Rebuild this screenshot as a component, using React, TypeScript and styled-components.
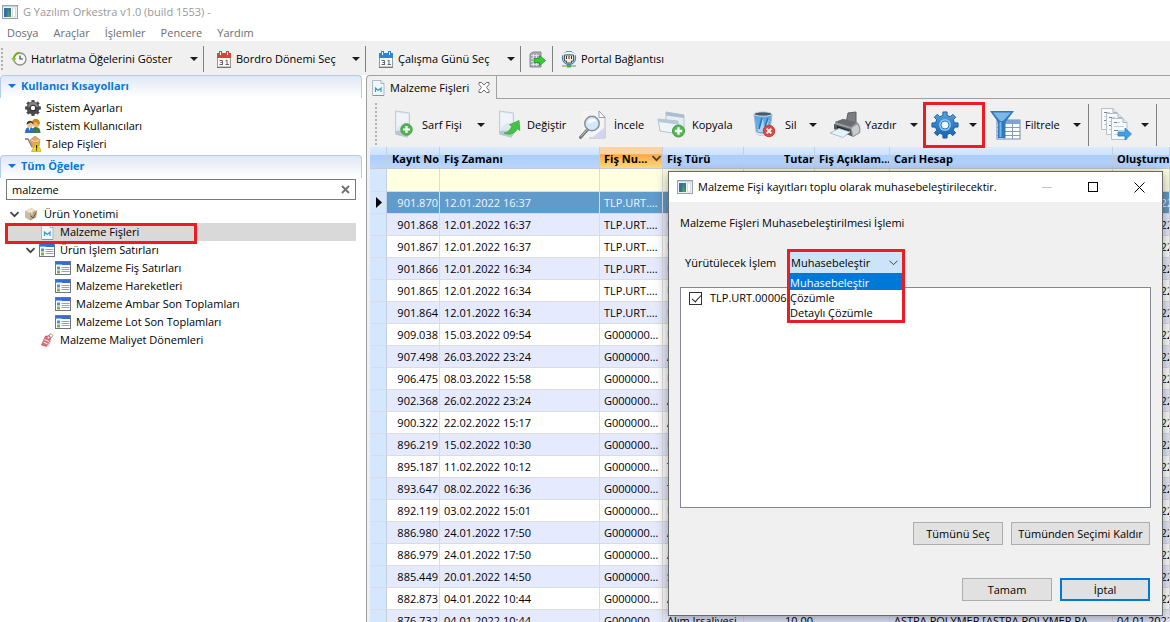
import React from "react";
import styled, { createGlobalStyle, css } from "styled-components";

const GlobalStyle = createGlobalStyle`
  * { box-sizing: border-box; }
  body { margin: 0; overflow: hidden; }
  body, button, input, select, table {
    font-family: "Open Sans", "Noto Sans", sans-serif;
    font-size: 11px;
    line-height: 16px;
    color: #000;
  }
  button { margin: 0; padding: 0; border: 0; background: none; white-space: nowrap; }
  svg { display: block; flex: none; }
  ul { list-style: none; margin: 0; padding: 0; }
`;

/* ---------- Window frame ---------- */

const Window = styled.div`
  position: relative;
  display: flex;
  flex-direction: column;
  height: 100vh;
  overflow: hidden;
  background: #fff;
`;

const TitleBar = styled.header`
  display: flex;
  align-items: center;
  gap: 5px;
  height: 23px;
  padding-left: 2px;
  color: #999;
  flex: none;
`;

const MenuBar = styled.nav`
  display: flex;
  align-items: center;
  gap: 15px;
  height: 18px;
  padding: 2px 0 0 7px;
  flex: none;
`;

const MenuItem = styled.button`
  color: #6d6d6d;
`;

const MainToolbar = styled.div`
  display: flex;
  align-items: center;
  height: 34px;
  padding-top: 2px;
  background: #f0f0f0;
  flex: none;
`;

const Grip = styled.span<{ $tall?: boolean }>`
  width: 2px;
  margin-left: ${(p) => (p.$tall ? 5 : 1)}px;
  height: ${(p) => (p.$tall ? 44 : 22)}px;
  background: repeating-linear-gradient(#b0b0b0 0 2px, transparent 2px 4px);
  flex: none;
`;

const MainTool = styled.button<{ $width?: number; $indent?: boolean }>`
  display: flex;
  align-items: center;
  gap: 4px;
  width: ${(p) => (p.$width ? p.$width + "px" : "auto")};
  height: 26px;
  padding: 0 5px 0 ${(p) => (p.$indent ? 12 : 8)}px;
  border-right: ${(p) => (p.$width ? "1px solid #808080" : "0")};
`;

const ArrowMark = styled.span`
  width: 0;
  height: 0;
  margin-left: auto;
  border: 4px solid transparent;
  border-top-color: #1c1c1c;
  border-bottom: 0;
`;

const Content = styled.div`
  display: flex;
  flex: 1;
  min-height: 0;
`;

/* ---------- Left pane ---------- */

const SidePane = styled.aside`
  display: flex;
  flex-direction: column;
  width: 362px;
  flex: none;
  background: #fff;
`;

const SectionHead = styled.button`
  display: flex;
  align-items: center;
  gap: 5px;
  height: 23px;
  padding: 0 0 2px 7px;
  border: 1px solid #b4cde4;
  border-bottom: 0;
  border-radius: 4px 4px 0 0;
  background: linear-gradient(#dfe8f4, #fff);
  color: #0a78d4;
  font-weight: 700;
  text-align: left;
  flex: none;
`;

const SectionArrow = styled.span`
  border: 4px solid transparent;
  border-top-color: #0a78d4;
  border-bottom: 0;
`;

const ShortcutList = styled.ul`
  padding: 1px 0 2px;
`;

const Shortcut = styled.li`
  display: flex;
  align-items: center;
  gap: 5px;
  height: 18px;
  padding-left: 25px;
`;

const SearchField = styled.div`
  display: flex;
  align-items: center;
  height: 21px;
  margin: 1px 6px 5px;
  padding: 0 5px;
  border: 1px solid #7a7a7a;
  flex: none;
`;

const SearchInput = styled.input`
  flex: 1;
  min-width: 0;
  height: 18px;
  padding: 0;
  border: 0;
  outline: 0;
  background: none;
`;

const Tree = styled.ul`
  margin: 0 6px;
`;

const TreeRow = styled.li<{ $level: number; $selected?: boolean }>`
  position: relative;
  display: flex;
  align-items: center;
  gap: 5px;
  height: 18px;
  padding-left: ${(p) => p.$level * 16 + 3}px;
  background: ${(p) => (p.$selected ? "#d9d9d9" : "transparent")};
`;

const Twisty = styled.span`
  width: 9px;
  flex: none;
`;

const RedFrame = styled.span<{ $t?: number; $r?: number; $b?: number; $l?: number; $w?: number }>`
  position: absolute;
  top: ${(p) => p.$t ?? -2}px;
  bottom: ${(p) => p.$b ?? -2}px;
  left: ${(p) => p.$l ?? -2}px;
  ${(p) => (p.$w ? `width: ${p.$w}px;` : `right: ${p.$r ?? -2}px;`)}
  border: 3px solid #ed1c24;
  pointer-events: none;
  z-index: 2;
`;

/* ---------- Editor ---------- */

const Editor = styled.main`
  display: flex;
  flex-direction: column;
  flex: 1;
  min-width: 0;
  margin-left: 4px;
  padding-left: 3px;
  border: 1px solid #a0a0a0;
  border-right: 0;
  border-bottom: 0;
  border-radius: 4px 0 0 0;
  background: #f0f0f0;
`;

const TabStrip = styled.div`
  display: flex;
  height: 23px;
  margin-left: -3px;
  flex: none;
`;

const Tab = styled.button`
  display: flex;
  align-items: center;
  width: 130px;
  padding: 0 6px 0 5px;
  border-right: 1px solid #a0a0a0;
`;

const TabLabel = styled.span`
  flex: 1;
  padding-left: 5px;
  text-align: left;
`;

const TabFiller = styled.div`
  flex: 1;
  border-bottom: 1px solid #a0a0a0;
`;

const EditorToolbar = styled.div`
  display: flex;
  align-items: center;
  height: 48px;
  padding-top: 3px;
  flex: none;
`;

const Tool = styled.button<{ $width: number; $slot: number; $bar?: boolean }>`
  position: relative;
  display: grid;
  grid-template-columns: ${(p) => p.$slot}px auto 1fr;
  align-items: center;
  width: ${(p) => p.$width}px;
  height: 42px;
  text-align: left;
  padding-right: 13px;
  flex: none;
  ${(p) =>
    p.$bar &&
    css`
      padding-right: 7px;
      border-right: 1px solid #808080;
    `}
`;

const ToolGap = styled.span<{ $width: number }>`
  width: ${(p) => p.$width}px;
  flex: none;
`;

const GridView = styled.div`
  flex: 1;
  min-height: 0;
  overflow: hidden;
  background: #fff;
`;

const Grid = styled.table`
  width: 100%;
  table-layout: fixed;
  border-collapse: separate;
  border-spacing: 0;
`;

const HeadCell = styled.th<{ $right?: boolean; $sorted?: boolean }>`
  height: 22px;
  padding: 2px 0 0 4px;
  overflow: hidden;
  white-space: nowrap;
  font-weight: 700;
  text-align: ${(p) => (p.$right ? "right" : "left")};
  border-right: 1px solid #c3cfdf;
  border-bottom: 1px solid #c3cbd8;
  background: ${(p) =>
    p.$sorted
      ? "linear-gradient(#fbd3a0 0 35%, #f9a648 36%, #ffdb78)"
      : "linear-gradient(#dcebfe 0, #cde2fe 36%, #abcdfb 37%, #b9d6fd)"};
`;

const SortedLabel = styled.span`
  display: flex;
  align-items: center;
  justify-content: space-between;
`;

const GridRow = styled.tr<{ $tone: "filter" | "selected" | "odd" | "even" }>`
  height: ${(p) => (p.$tone === "filter" ? 23 : 22)}px;
  color: ${(p) => (p.$tone === "selected" ? "#f2f6fb" : "#000")};
  background: ${(p) =>
    ({ filter: "#ffffe1", selected: "#609bcb", odd: "#e5eafe", even: "#fff" })[p.$tone]};
`;

const Cell = styled.td<{ $right?: boolean }>`
  padding: 0 ${(p) => (p.$right ? 1 : 0)}px 0 4px;
  overflow: hidden;
  white-space: nowrap;
  text-align: ${(p) => (p.$right ? "right" : "left")};
  border-right: 1px solid #dcdcdc;
  border-bottom: 1px solid #dcdcdc;
`;

const RowHead = styled.td`
  padding: 0 0 0 6px;
  border-right: 1px solid #c3cfdf;
  border-bottom: 1px solid #d8dde6;
  background: #d5e7fe;
`;

/* ---------- Dialog ---------- */

const Dialog = styled.section`
  position: absolute;
  top: 171px;
  right: 7px;
  width: 495px;
  border: 1px solid #6b6b6b;
  background: #f0f0f0;
  box-shadow: 0 2px 12px rgba(0, 0, 0, 0.4);
`;

const DialogTitle = styled.header`
  display: flex;
  align-items: center;
  height: 30px;
  padding-left: 8px;
  background: #fff;
`;

const DialogName = styled.h2`
  flex: 1;
  margin: 0;
  padding-left: 5px;
  font-size: 11px;
  font-weight: 400;
`;

const WindowButton = styled.button`
  display: flex;
  align-items: center;
  justify-content: center;
  width: 46px;
  height: 30px;
`;

const DialogBody = styled.div`
  padding: 13px 11px 14px;
`;

const Intro = styled.p`
  margin: 0 0 20px;
`;

const FieldRow = styled.div`
  display: flex;
  align-items: center;
  padding-left: 5px;
  margin-bottom: 13px;
`;

const FieldLabel = styled.label`
  width: 104px;
`;

const Combo = styled.div`
  position: relative;
  width: 114px;
  height: 23px;
`;

const ComboSelect = styled.select`
  appearance: none;
  width: 100%;
  height: 23px;
  padding: 0 0 0 1px;
  border: 1px solid #0078d7;
  border-radius: 0;
  background: #cce4f7;
  outline: 0;
`;

const ComboChevron = styled.span`
  position: absolute;
  right: 5px;
  top: 9px;
  pointer-events: none;
`;

const ComboList = styled.ul`
  position: absolute;
  z-index: 1;
  top: 23px;
  left: 0;
  right: 0;
  border: 1px solid #0078d7;
  background: #fff;
`;

const ComboOption = styled.li<{ $active?: boolean }>`
  height: 15px;
  line-height: 15px;
  color: ${(p) => (p.$active ? "#fff" : "#000")};
  background: ${(p) => (p.$active ? "#0078d7" : "#fff")};
`;

const RecordList = styled.div`
  height: 221px;
  padding: 2px 8px;
  border: 1px solid #828790;
  background: #fff;
`;

const Record = styled.label`
  display: flex;
  align-items: center;
  gap: 8px;
`;

const CheckBox = styled.input`
  appearance: none;
  width: 13px;
  height: 13px;
  margin: 0;
  border: 1px solid #333;
  background: #fff;
  &:checked::after {
    content: "";
    display: block;
    width: 4px;
    height: 8px;
    margin: 0 0 0 4px;
    border: solid #222;
    border-width: 0 1px 1px 0;
    transform: rotate(42deg);
  }
`;

const ButtonRow = styled.div<{ $gap?: number }>`
  display: flex;
  justify-content: flex-end;
  gap: 8px;
  margin-top: ${(p) => p.$gap ?? 14}px;
  padding-right: 1px;
`;

const PushButton = styled.button<{ $wide?: boolean; $primary?: boolean }>`
  width: ${(p) => (p.$wide ? 139 : 90)}px;
  height: 23px;
  border: ${(p) => (p.$primary ? "2px solid #0078d7" : "1px solid #adadad")};
  background: #e1e1e1;
`;

/* ---------- Icons ---------- */

const AppIcon = () => (
  <svg width="16" height="14" viewBox="0 0 16 14">
    <rect x=".5" y=".5" width="15" height="13" fill="#eef1f4" stroke="#9aa4ae" />
    <rect x="2" y="3" width="7" height="9" fill="#3c7d86" />
    <path d="M2 3h3v9H2z" fill="#356fa8" />
    <path d="M6 5l3 7H5z" fill="#4f9b5e" />
    <path d="M10.500 3v9h3V3z" fill="#fff" stroke="#d5dbe1" />
    <path d="M1 1.500h14" stroke="#c9d3de" />
  </svg>
);

const ClockIcon = () => (
  <svg width="16" height="16" viewBox="0 0 16 16">
    <circle cx="9" cy="8" r="6" fill="#f7f7f7" stroke="#8f8f8f" strokeWidth="1.300" />
    <path d="M9 4.500V8h3" fill="none" stroke="#444" strokeWidth="1.200" />
    <path d="M2.800 9A6.300 6.300 0 0 1 8.500 1.700" fill="none" stroke="#6fae17" strokeWidth="1.800" />
    <path d="M0 7h5.500L2.800 10.500z" fill="#8ac926" />
  </svg>
);

const CalendarIcon = ({ color }: { color: string }) => (
  <svg width="16" height="17" viewBox="0 0 16 17">
    <rect x="1.500" y="3" width="13" height="13" fill="#fbfbfb" stroke="#9a9a9a" />
    <rect x="1" y="2" width="14" height="5" fill={color} />
    <path d="M4.500 0v4M11.500 0v4" stroke={color} strokeWidth="3" />
    <path d="M4.500 1v3M11.500 1v3" stroke="#fff" strokeWidth="1" />
    <path d="M3.500 9.500H6.500V14M3.500 13.500H7M4.500 11.500H7M9.500 10l1.500-1v5M9.500 13.500H13" fill="none" stroke="#666" />
    <path d="M1 16.500h14" stroke="#777" />
  </svg>
);

const ExitIcon = () => (
  <svg width="17" height="17" viewBox="0 0 17 17">
    <path d="M1 3l3-2h8v15H1z" fill="#a9a8b4" stroke="#8a8996" />
    <path d="M2 4.500h9M2 7.500h9M2 10.500h9M2 13.500h9M4.500 3v12M7.500 3v12" stroke="#dedee4" />
    <path d="M5 7.500h5.500V4.500l6 5-6 5v-3H5z" fill="#35cf35" stroke="#1a8f1a" strokeWidth=".8" />
  </svg>
);

const PortalIcon = () => (
  <svg width="16" height="17" viewBox="0 0 16 17">
    <circle cx="8" cy="7" r="6.700" fill="#a9cdec" stroke="#3b78b8" />
    <path d="M2 4c4-3 8-3 12 0" stroke="#e9f5ff" fill="none" strokeWidth="2" />
    <path d="M3.500 4h9v6h-2v2h-5v-2h-2z" fill="#f1ead9" stroke="#5b5046" />
    <path d="M5.500 5v3M8 5v3M10.500 5v3" stroke="#3a3028" />
    <path d="M1 15h14M8 12v3" stroke="#6c8c6c" />
    <rect x="6" y="14" width="4" height="2.500" fill="#39b54a" />
  </svg>
);

const gearPath = (n: number, ro: number, ri: number, c: number) => {
  const pts: string[] = [];
  const step = (Math.PI * 2) / n;
  for (let i = 0; i < n; i++) {
    const a = i * step - Math.PI / 2;
    [
      [-0.28, ri],
      [-0.2, ro],
      [0.2, ro],
      [0.28, ri],
    ].forEach(([d, r]) => {
      pts.push(`${(c + r * Math.cos(a + d * step)).toFixed(2)} ${(c + r * Math.sin(a + d * step)).toFixed(2)}`);
    });
  }
  return "M" + pts.join("L") + "Z";
};

const DarkGearIcon = () => (
  <svg width="16" height="16" viewBox="0 0 16 16">
    <path d={gearPath(8, 7.8, 6.2, 8)} fill="#4a4a4a" stroke="#2e2e2e" strokeWidth=".5" />
    <path d="M3 7a5 5 0 0 1 10 0" fill="#858585" />
    <circle cx="8" cy="8" r="2.800" fill="#fff" stroke="#222" />
  </svg>
);

const UsersIcon = () => (
  <svg width="16" height="16" viewBox="0 0 16 16">
    <path d="M7 15c0-4 1-6 4-6s4.500 2 4.500 6z" fill="#3f7a4a" />
    <circle cx="11" cy="5.500" r="3.500" fill="#f0b36a" />
    <path d="M7 6c-1-7 8-7 8-.5l-2 2c0-2-1-3-3-3.500z" fill="#c98a1c" />
    <path d="M0 15c0-4 1.500-6 4.500-6S9 11 9 15z" fill="#2f6dc4" />
    <path d="M3.500 9h2L4.500 13z" fill="#fff" />
    <circle cx="5" cy="6.500" r="3" fill="#f3c38c" />
    <path d="M1.500 6.500c0-5 7-5 7 0L6 4.500z" fill="#4e3520" />
  </svg>
);

const CartIcon = () => (
  <svg width="17" height="16" viewBox="0 0 17 16">
    <path d="M0 3h3l4 8" fill="none" stroke="#777" strokeWidth="1.300" />
    <path d="M5 4l5-4 5 4-1 6-6 2z" fill="#e3a565" stroke="#b98552" strokeWidth=".7" />
    <path d="M6 4l4 1.500L14.500 4" fill="none" stroke="#fadcb8" />
    <path d="M11.500 6L16.500 15.500H6.500z" fill="#f7dc1e" stroke="#c9a800" strokeWidth=".7" />
    <path d="M11.600 9v3.500M11.600 13.300v1.200" stroke="#222" strokeWidth="1.300" />
  </svg>
);

const BoxIcon = () => (
  <svg width="14" height="14" viewBox="0 0 14 14">
    <path d="M1 4l6-3 6 2.500-1 7-6 3-5-3z" fill="#cdbca2" />
    <path d="M1 4l5 2 7-2.500L7 1z" fill="#eadfcc" />
    <path d="M6 6v7.500l6-3 1-7z" fill="#b6a081" />
    <path d="M7 9l2 2 3-5" stroke="#6d5b43" fill="none" />
    <path d="M3 3l5 2v3" stroke="#f4ecdc" fill="none" />
  </svg>
);

const DocIcon = () => (
  <svg width="13" height="16" viewBox="0 0 13 16">
    <path d="M.5 .5H9L12 3.500V15.500H.5z" fill="#f1f6f9" stroke="#a9bcc9" />
    <path d="M9 .5v3h3" fill="#fff" stroke="#9fb4c4" />
    <path d="M3.500 12V8L6.300 10.500 9 8V12" fill="none" stroke="#3d9ccb" strokeWidth="1.200" />
    <path d="M1 15.500h11" stroke="#7b98aa" />
  </svg>
);

const FormIcon = () => (
  <svg width="16" height="14" viewBox="0 0 16 14">
    <rect x=".5" y=".5" width="15" height="13" fill="#fff" stroke="#6f7683" />
    <rect x="1" y="1" width="14" height="3" fill="#2e6fdc" />
    <path d="M1 3.500h6" stroke="#7fb0f5" />
    <rect x="2" y="5.500" width="3" height="3" fill="#4a94e0" />
    <rect x="2" y="9.500" width="3" height="3" fill="#7fb53a" />
    <path d="M6.500 6.500h8M6.500 8.500h8M6.500 10.500h8" stroke="#9ca2ac" />
  </svg>
);

const TagIcon = () => (
  <svg width="14" height="14" viewBox="0 0 14 14">
    <path d="M8 3l3-2.500 2 2-2.500 3" fill="none" stroke="#8d8d8d" />
    <path d="M5.500 3L10 3l.5 3.500-4 7L1.500 12z" fill="#dd6a70" stroke="#b5474f" strokeWidth=".6" />
    <path d="M4.500 6.500l4.500 2M3.500 9l4 2" stroke="#fbe6e7" strokeWidth="1.200" />
    <circle cx="8.500" cy="4.500" r="1" fill="#fff" />
    <path d="M8 13.500l3-6" stroke="#bfc4c9" />
  </svg>
);

const ExpandIcon = () => (
  <svg width="11" height="7" viewBox="0 0 11 7">
    <path d="M1.500 1.200l4 4 4-4" fill="none" stroke="#404040" strokeWidth="1.700" />
  </svg>
);

const ClearIcon = () => (
  <svg width="9" height="9" viewBox="0 0 9 9">
    <path d="M1 1l7 7M8 1L1 8" stroke="#6f6f6f" strokeWidth="1.800" />
  </svg>
);

const TabCloseIcon = () => (
  <svg width="12" height="11" viewBox="0 0 12 11">
    <path
      d="M1 .5h2.500L6 3 8.500.5H11v2L8.500 5.500 11 8.500v2H8.500L6 8l-2.500 2.500H1v-2L3.500 5.500 1 2.500z"
      fill="#fff"
      stroke="#6a6a6a"
    />
  </svg>
);

const PageShape = () => (
  <g>
    <path d="M1.500 1l14 2v20l-2 4-12-3z" fill="#dce7ee" stroke="#c0ced8" />
    <path d="M2.500 2.500l12 1.700V13C9 12 5 15 2.500 19z" fill="#eef4f8" />
    <path d="M1.500 21l14-1v3l-2 4.500-12-3z" fill="#b7c8d3" />
  </g>
);

const NewIcon = () => (
  <svg width="19" height="29" viewBox="0 0 19 29">
    <PageShape />
    <circle cx="12.500" cy="19.500" r="5.700" fill="#4fb54f" stroke="#4a9a4c" />
    <path d="M12.500 16v7M9 19.500h7" stroke="#fff" strokeWidth="2.200" />
  </svg>
);

const EditIcon = () => (
  <svg width="24" height="29" viewBox="0 0 24 29">
    <PageShape />
    <path
      d="M6 23c4 0 6-3 8-7l-2.500-1.200L21 10.500l.8 10-2.300-1.800c-2.500 4.500-7 7-13.500 4.300z"
      fill="#45c245"
      stroke="#38a83c"
      strokeWidth=".8"
    />
  </svg>
);

const InspectIcon = () => (
  <svg width="28" height="29" viewBox="0 0 28 29">
    <path d="M2.500 1H20l6 6v21H2.500z" fill="#f4f4f5" />
    <path d="M20 1l6 6v21H10" fill="none" stroke="#b5b8c0" />
    <path d="M20 1v6.500h6z" fill="#fff" stroke="#9da0a8" />
    <path d="M25 18v9H14z" fill="#cdd6f8" />
    <path d="M1.500 27.500L9 19" stroke="#777" strokeWidth="3" strokeLinecap="round" />
    <path d="M2 26.500L8.500 19" stroke="#c4c4c4" />
    <circle cx="13" cy="13.500" r="7.200" fill="#d4e8fb" stroke="#8a9099" strokeWidth="1.500" />
    <path d="M8.500 13a5 5 0 0 1 9-2c-3 0-5 3-9 2z" fill="#f5fbff" />
  </svg>
);

const CopyIcon = () => (
  <svg width="29" height="28" viewBox="0 0 29 28">
    <path d="M9 1l18 3v13l-18-2z" fill="#e6eef3" stroke="#b4c4cf" />
    <path d="M9 1l18 3v3L9 4.500z" fill="#a9bfce" />
    <path d="M1 8l20 2v13L3 20z" fill="#eef4f8" stroke="#b4c4cf" />
    <path d="M1 8l20 2v3.500L1.500 11z" fill="#b5c8d4" />
    <circle cx="21.500" cy="20" r="6" fill="#52b752" stroke="#3f9a42" />
    <path d="M21.500 16.300v7.400M17.800 20h7.400" stroke="#fff" strokeWidth="2.300" />
  </svg>
);

const DeleteIcon = () => (
  <svg width="23" height="27" viewBox="0 0 23 27">
    <path d="M1 3h18l-2.500 20c-4 2-9 2-13 0z" fill="#5fa8e2" stroke="#a3b4c2" />
    <path d="M3 7l2 11 5-11 1 9 5-9-2 14H5z" fill="#a9d5f6" />
    <path d="M9 7L6 18M15 7l-4 12" stroke="#2d70b4" strokeWidth="1.500" />
    <ellipse cx="10" cy="3" rx="9" ry="2.200" fill="#48596a" stroke="#d3dbe1" />
    <path d="M3 22c4 2 9 2 13 0" stroke="#dfe6ec" strokeWidth="2" fill="none" />
    <circle cx="16" cy="20" r="5.700" fill="#e04a43" stroke="#c93a34" />
    <path d="M13.700 17.700l4.600 4.600M18.300 17.700l-4.600 4.600" stroke="#fff" strokeWidth="1.900" />
  </svg>
);

const PrintIcon = () => (
  <svg width="31" height="27" viewBox="0 0 31 27">
    <path d="M16 12L18 2l8-1v12z" fill="#7b7d80" stroke="#5d5f62" />
    <path d="M5 11l8-3 14 3c3 2 4 7 3 11l-7 4-9-4-9-4z" fill="#9a9c9f" />
    <path d="M5 11l8-3 14 3-6 5z" fill="#696c70" />
    <path d="M4 13l17 5 1 7-9-3-9-4z" fill="#55585c" />
    <path d="M21 17l6-4c3 2 3 6 2 9l-6 3.500z" fill="#c9cbce" stroke="#85888c" strokeWidth=".7" />
    <path d="M7 15l12 4v2L7 17z" fill="#232528" />
    <path d="M0 22l9-4.500L20 21l-7 5.500z" fill="#e3f4fc" stroke="#9fb6c2" strokeWidth=".8" />
  </svg>
);

const GearIcon = () => (
  <svg width="28" height="28" viewBox="0 0 28 28">
    <defs>
      <linearGradient id="gearFill" x1="0" y1="0" x2="0" y2="1">
        <stop offset="0" stopColor="#5ea6de" />
        <stop offset=".5" stopColor="#2c80c8" />
        <stop offset="1" stopColor="#1c64ac" />
      </linearGradient>
    </defs>
    <path d={gearPath(8, 13.2, 9.8, 14)} fill="url(#gearFill)" stroke="#1f62a6" strokeLinejoin="round" />
    <circle cx="14" cy="14" r="6" fill="#8cc3ec" />
    <circle cx="14" cy="14" r="4" fill="#f4f8fb" stroke="#2b78bb" />
  </svg>
);

const FilterIcon = () => (
  <svg width="31" height="30" viewBox="0 0 31 30">
    <rect x="7" y="10" width="23" height="19" fill="#fff" stroke="#6d8bb3" />
    <rect x="7" y="10" width="23" height="4" fill="#7ea5d6" />
    <path d="M7 17.500h23M7 21.500h23M7 25.500h23M14.500 10v19M22.500 10v19" stroke="#7f9bc0" />
    <path d="M0 1h24l-8.500 11v16H8V12z" fill="#3079bd" />
    <path d="M3 2.500h18L13 11H10z" fill="#7db9e6" />
    <path d="M9.500 12h2v15h-2z" fill="#7ab5e2" />
  </svg>
);

const Leaf = ({ x, y }: { x: number; y: number }) => (
  <g transform={`translate(${x} ${y})`}>
    <path d="M.5 .5H12l4 4V21.500H.5z" fill="#f7fafc" stroke="#b4c0ca" />
    <path d="M12 .5v4h4" fill="#dfe7ec" stroke="#a9b6c0" />
    <path d="M3 4.500h6M3 8.500h10M3 12.500h10M3 16.500h7" stroke="#c3ced6" />
    <path d="M3 4.500h3M3 12.500h4" stroke="#70869a" />
  </g>
);

const ExportIcon = () => (
  <svg width="32" height="33" viewBox="0 0 32 33">
    <Leaf x={0} y={0} />
    <Leaf x={5} y={5} />
    <Leaf x={10} y={10} />
    <path d="M17 24h7v-4l6.500 6-6.500 6v-4h-7z" fill="#3da0e8" stroke="#2a80c4" strokeWidth=".8" />
  </svg>
);

/* ---------- Data ---------- */

const shortcuts = [
  { icon: <DarkGearIcon />, label: "Sistem Ayarları" },
  { icon: <UsersIcon />, label: "Sistem Kullanıcıları" },
  { icon: <CartIcon />, label: "Talep Fişleri" },
];

type Node = { level: number; icon: React.ReactNode; label: string; open?: boolean; selected?: boolean };
const nodes: Node[] = [
  { level: 0, icon: <BoxIcon />, label: "Ürün Yonetimi", open: true },
  { level: 1, icon: <DocIcon />, label: "Malzeme Fişleri", selected: true },
  { level: 1, icon: <FormIcon />, label: "Ürün İşlem Satırları", open: true },
  { level: 2, icon: <FormIcon />, label: "Malzeme Fiş Satırları" },
  { level: 2, icon: <FormIcon />, label: "Malzeme Hareketleri" },
  { level: 2, icon: <FormIcon />, label: "Malzeme Ambar Son Toplamları" },
  { level: 2, icon: <FormIcon />, label: "Malzeme Lot Son Toplamları" },
  { level: 1, icon: <TagIcon />, label: "Malzeme Maliyet Dönemleri" },
];

const IconSlot = styled.span`
  display: flex;
  justify-content: center;
  width: 16px;
  max-height: 18px;
  overflow: hidden;
  flex: none;
`;

type Entry = [no: string, time: string, code: string, kind: string, amount?: string, account?: string];
const records: Entry[] = [
  ["901.870", "12.01.2022 16:37", "TLP.URT.…", "Üretim"],
  ["901.868", "12.01.2022 16:37", "TLP.URT.…", "Üretim"],
  ["901.867", "12.01.2022 16:37", "TLP.URT.…", "Üretim"],
  ["901.866", "12.01.2022 16:34", "TLP.URT.…", "Üretim"],
  ["901.865", "12.01.2022 16:34", "TLP.URT.…", "Üretim"],
  ["901.864", "12.01.2022 16:34", "TLP.URT.…", "Üretim"],
  ["909.038", "15.03.2022 09:54", "G000000…", "Üretim"],
  ["907.498", "26.03.2022 23:24", "G000000…", "Alım İrsaliyesi"],
  ["906.475", "08.03.2022 15:58", "G000000…", "Üretim"],
  ["902.368", "26.02.2022 23:24", "G000000…", "Alım İrsaliyesi"],
  ["900.322", "22.02.2022 15:17", "G000000…", "Alım İrsaliyesi"],
  ["896.219", "15.02.2022 10:30", "G000000…", "Üretim"],
  ["895.187", "11.02.2022 10:12", "G000000…", "Transfer"],
  ["893.647", "08.02.2022 16:36", "G000000…", "Transfer"],
  ["892.119", "03.02.2022 15:01", "G000000…", "Üretim"],
  ["886.980", "24.01.2022 17:50", "G000000…", "Alım İrsaliyesi"],
  ["886.979", "24.01.2022 17:50", "G000000…", "Alım İrsaliyesi"],
  ["885.449", "20.01.2022 14:50", "G000000…", "Sarf Fişi"],
  ["882.873", "04.01.2022 10:44", "G000000…", "Alım İrsaliyesi"],
  ["876.732", "04.01.2022 10:44", "G000000…", "Alım İrsaliyesi", "10,00", "ASTRA POLYMER [ASTRA POLYMER PA…"],
];

const columnWidths = [17, 53, 160, 63, 81, 71, 75, 223];
const operations = ["Muhasebeleştir", "Çözümle", "Detaylı Çözümle"];

/* ---------- Page ---------- */

export default function App() {
  return (
    <Window>
      <GlobalStyle />
      <TitleBar>
        <AppIcon />
        <span>G Yazılım Orkestra v1.0 (build 1553) -</span>
      </TitleBar>
      <MenuBar>
        {["Dosya", "Araçlar", "İşlemler", "Pencere", "Yardım"].map((m) => (
          <MenuItem key={m}>{m}</MenuItem>
        ))}
      </MenuBar>
      <MainToolbar>
        <Grip />
        <MainTool $width={201}>
          <ClockIcon />
          Hatırlatma Öğelerini Göster
          <ArrowMark />
        </MainTool>
        <MainTool $width={162} $indent>
          <CalendarIcon color="#e0403c" />
          Bordro Dönemi Seç
          <ArrowMark />
        </MainTool>
        <MainTool $width={155} $indent>
          <CalendarIcon color="#2f86d0" />
          Çalışma Günü Seç
          <ArrowMark />
        </MainTool>
        <MainTool $width={32} aria-label="Çıkış">
          <ExitIcon />
        </MainTool>
        <MainTool>
          <PortalIcon />
          Portal Bağlantısı
        </MainTool>
      </MainToolbar>

      <Content>
        <SidePane>
          <SectionHead>
            <SectionArrow />
            Kullanıcı Kısayolları
          </SectionHead>
          <ShortcutList>
            {shortcuts.map((s) => (
              <Shortcut key={s.label}>
                <IconSlot>{s.icon}</IconSlot>
                {s.label}
              </Shortcut>
            ))}
          </ShortcutList>
          <SectionHead>
            <SectionArrow />
            Tüm Öğeler
          </SectionHead>
          <SearchField>
            <SearchInput aria-label="Ara" defaultValue="malzeme" />
            <button aria-label="Temizle">
              <ClearIcon />
            </button>
          </SearchField>
          <Tree>
            {nodes.map((n) => (
              <TreeRow key={n.label} $level={n.level} $selected={n.selected}>
                <Twisty>{n.open && <ExpandIcon />}</Twisty>
                <IconSlot>{n.icon}</IconSlot>
                {n.label}
                {n.selected && <RedFrame $t={0} $b={-3} $l={-1} $w={192} />}
              </TreeRow>
            ))}
          </Tree>
        </SidePane>

        <Editor>
          <TabStrip>
            <Tab>
              <DocIcon />
              <TabLabel>Malzeme Fişleri</TabLabel>
              <TabCloseIcon />
            </Tab>
            <TabFiller />
          </TabStrip>
          <EditorToolbar>
            <Grip $tall />
            <ToolGap $width={17} />
            <Tool $width={104} $slot={28}>
              <NewIcon />
              Sarf Fişi
              <ArrowMark />
            </Tool>
            <Tool $width={81} $slot={29}>
              <EditIcon />
              Değiştir
            </Tool>
            <Tool $width={78} $slot={35}>
              <InspectIcon />
              İncele
            </Tool>
            <Tool $width={96} $slot={35}>
              <CopyIcon />
              Kopyala
            </Tool>
            <Tool $width={77} $slot={32}>
              <DeleteIcon />
              Sil
              <ArrowMark />
            </Tool>
            <Tool $width={101} $slot={35}>
              <PrintIcon />
              Yazdır
              <ArrowMark />
            </Tool>
            <Tool $width={59} $slot={28} aria-label="İşlemler">
              <GearIcon />
              <span />
              <ArrowMark />
              <RedFrame $l={-8} $r={5} />
            </Tool>
            <Tool $width={99} $slot={35} $bar>
              <FilterIcon />
              Filtrele
              <ArrowMark />
            </Tool>
            <ToolGap $width={12} />
            <Tool $width={56} $slot={32} $bar aria-label="Aktar">
              <ExportIcon />
              <span />
              <ArrowMark />
            </Tool>
          </EditorToolbar>
          <GridView>
            <Grid>
              <colgroup>
                {columnWidths.map((w, i) => (
                  <col key={i} width={w} />
                ))}
                <col />
              </colgroup>
              <thead>
                <tr>
                  <HeadCell />
                  <HeadCell $right>Kayıt No</HeadCell>
                  <HeadCell>Fiş Zamanı</HeadCell>
                  <HeadCell $sorted>
                    <SortedLabel>
                      Fiş Nu…
                      <ExpandIcon />
                    </SortedLabel>
                  </HeadCell>
                  <HeadCell>Fiş Türü</HeadCell>
                  <HeadCell $right>Tutar</HeadCell>
                  <HeadCell>Fiş Açıklam…</HeadCell>
                  <HeadCell>Cari Hesap</HeadCell>
                  <HeadCell>Oluşturma</HeadCell>
                </tr>
              </thead>
              <tbody>
                <GridRow $tone="filter">
                  <RowHead />
                  {[...columnWidths.slice(1), 0].map((_, i) => (
                    <Cell key={i} />
                  ))}
                </GridRow>
                {records.map(([no, time, code, kind, amount, account], i) => (
                  <GridRow key={no} $tone={i === 0 ? "selected" : i % 2 ? "odd" : "even"}>
                    <RowHead>
                      {i === 0 && (
                        <svg width="6" height="11" viewBox="0 0 6 11">
                          <path d="M0 0l6 5.500L0 11z" fill="#000" />
                        </svg>
                      )}
                    </RowHead>
                    <Cell $right>{no}</Cell>
                    <Cell>{time}</Cell>
                    <Cell>{code}</Cell>
                    <Cell>{kind}</Cell>
                    <Cell $right>{amount}</Cell>
                    <Cell />
                    <Cell>{account}</Cell>
                    <Cell>{time}</Cell>
                  </GridRow>
                ))}
              </tbody>
            </Grid>
          </GridView>
        </Editor>
      </Content>

      <Dialog role="dialog" aria-labelledby="dialog-name">
        <DialogTitle>
          <AppIcon />
          <DialogName id="dialog-name">Malzeme Fişi kayıtları toplu olarak muhasebeleştirilecektir.</DialogName>
          <WindowButton aria-label="Küçült">
            <svg width="10" height="10" viewBox="0 0 10 10">
              <path d="M0 5.500h10" stroke="#c4c4c4" />
            </svg>
          </WindowButton>
          <WindowButton aria-label="Büyüt">
            <svg width="10" height="10" viewBox="0 0 10 10">
              <rect x=".5" y=".5" width="9" height="9" fill="none" stroke="#000" />
            </svg>
          </WindowButton>
          <WindowButton aria-label="Kapat">
            <svg width="11" height="11" viewBox="0 0 11 11">
              <path d="M.5 .5l10 10M10.500 .5l-10 10" stroke="#000" />
            </svg>
          </WindowButton>
        </DialogTitle>
        <DialogBody>
          <Intro>Malzeme Fişleri Muhasebeleştirilmesi İşlemi</Intro>
          <FieldRow>
            <FieldLabel htmlFor="operation">Yürütülecek İşlem</FieldLabel>
            <Combo>
              <ComboSelect id="operation" defaultValue={operations[0]}>
                {operations.map((o) => (
                  <option key={o}>{o}</option>
                ))}
              </ComboSelect>
              <ComboChevron>
                <svg width="9" height="6" viewBox="0 0 9 6">
                  <path d="M.5 .7l4 4 4-4" fill="none" stroke="#444" />
                </svg>
              </ComboChevron>
              <ComboList role="listbox" aria-label="Yürütülecek İşlem">
                {operations.map((o, i) => (
                  <ComboOption key={o} role="option" aria-selected={i === 0} $active={i === 0}>
                    {o}
                  </ComboOption>
                ))}
              </ComboList>
              <RedFrame $b={-49} />
            </Combo>
          </FieldRow>
          <RecordList>
            <Record>
              <CheckBox type="checkbox" defaultChecked />
              TLP.URT.00006
            </Record>
          </RecordList>
          <ButtonRow>
            <PushButton>Tümünü Seç</PushButton>
            <PushButton $wide>Tümünden Seçimi Kaldır</PushButton>
          </ButtonRow>
          <ButtonRow $gap={33}>
            <PushButton>Tamam</PushButton>
            <PushButton $primary>İptal</PushButton>
          </ButtonRow>
        </DialogBody>
      </Dialog>
    </Window>
  );
}
